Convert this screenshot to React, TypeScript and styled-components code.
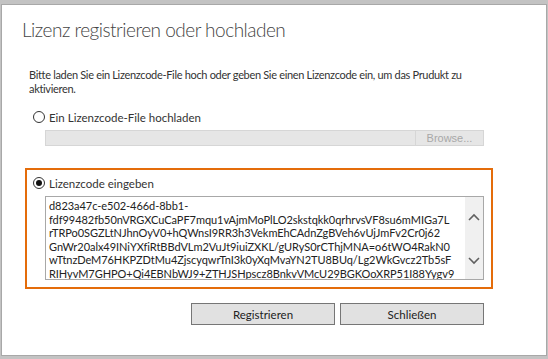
import React from 'react';
import styled, { createGlobalStyle } from 'styled-components';

const GlobalStyle = createGlobalStyle`
  html, body {
    margin: 0;
    padding: 0;
    background: #c3c3c3;
  }
  body {
    font-family: Lato, "Liberation Sans", sans-serif;
    color: #333;
  }
`;

const Dialog = styled.div`
  box-sizing: border-box;
  width: 546px;
  height: 352px;
  margin: 4px 0 0 1px;
  background: #fff;
  border: 1px solid #a8a8a8;
  display: flex;
  flex-direction: column;
`;

const Title = styled.h1`
  margin: 11px 0 0 20px;
  font-size: 19px;
  line-height: 28px;
  font-weight: 300;
  letter-spacing: -0.5px;
  color: #444;
`;

const Intro = styled.p`
  margin: 24px 0 0 27px;
  width: 450px;
  font-size: 11px;
  line-height: 14px;
  letter-spacing: -0.32px;
  color: #333;
`;

const Sections = styled.div`
  display: flex;
  flex-direction: column;
  gap: 13px;
  margin: 6px 0 0 23px;
  width: 468px;
`;

const Section = styled.div<{ $active?: boolean }>`
  box-sizing: border-box;
  display: flex;
  flex-direction: column;
  gap: 5px;
  padding: 5px 7px 7px 6px;
  border: 2px solid ${p => (p.$active ? '#e46c0a' : 'transparent')};
`;

const RadioRow = styled.label`
  display: flex;
  align-items: center;
  gap: 4px;
  height: 16px;
  font-size: 11.5px;
  color: #333;
`;

const Radio = styled.span<{ $checked?: boolean }>`
  box-sizing: border-box;
  width: 12px;
  height: 12px;
  border-radius: 50%;
  border: 1px solid #333;
  background: #fff;
  display: flex;
  align-items: center;
  justify-content: center;
  &::after {
    content: '';
    width: 6px;
    height: 6px;
    border-radius: 50%;
    background: ${p => (p.$checked ? '#111' : 'transparent')};
  }
`;

const FileField = styled.div`
  display: flex;
  margin-left: 12px;
  height: 16px;
`;

const FilePath = styled.div`
  flex: 1;
  box-sizing: border-box;
  background: #e6e6e6;
  border: 1px solid #d6d6d6;
  border-right: none;
`;

const BrowseButton = styled.div`
  box-sizing: border-box;
  width: 69px;
  background: #e6e6e6;
  border: 1px solid #d6d6d6;
  font-family: "Liberation Sans", Arial, sans-serif;
  font-size: 11px;
  line-height: 14px;
  color: #a8a8a8;
  text-align: center;
`;

const CodeBox = styled.div`
  box-sizing: border-box;
  display: flex;
  margin-left: 12px;
  height: 84px;
  border: 1px solid #a8a8a8;
  background: #fff;
`;

const CodeText = styled.div`
  flex: 1;
  overflow: hidden;
  padding: 2px 0 0 3px;
  font-size: 11px;
  line-height: 13.6px;
  letter-spacing: -0.05px;
  white-space: pre;
  color: #222;
`;

const ScrollBar = styled.div`
  width: 18px;
  background: #f0f0f0;
  display: flex;
  flex-direction: column;
  justify-content: space-between;
  align-items: center;
  padding: 16px 0 14px;
`;

const Buttons = styled.div`
  display: flex;
  justify-content: flex-end;
  gap: 5px;
  margin: 14px 62px 0 0;
`;

const Button = styled.button`
  box-sizing: border-box;
  width: 144px;
  height: 22px;
  padding: 0;
  border: 1px solid #767676;
  background: #e1e1e1;
  font-family: Lato, "Liberation Sans", sans-serif;
  font-size: 11.5px;
  color: #222;
`;

const Chevron = ({ up }: { up?: boolean }) => (
  <svg width="12" height="8" viewBox="0 0 12 8">
    <polyline
      points={up ? '1,7 6,2 11,7' : '1,1 6,6 11,1'}
      fill="none"
      stroke="#606060"
      strokeWidth="1.6"
    />
  </svg>
);

const codeLines = [
  'd823a47c-e502-466d-8bb1-',
  'fdf99482fb50nVRGXCuCaPF7mqu1vAjmMoPlLO2skstqkk0qrhrvsVF8su6mMIGa7L',
  'rTRPo0SGZLtNJhnOyV0+hQWnsI9RR3h3VekmEhCAdnZgBVeh6vUjJmFv2Cr0j62',
  'GnWr20alx49INiYXfiRtBBdVLm2VuJt9iuiZXKL/gURyS0rCThjMNA=o6tWO4RakN0',
  'wTtnzDeM76HKPZDtMu4ZjscyqwrTnI3k0yXqMvaYN2TU8BUq/Lg2WkGvcz2Tb5sF',
  'RIHyvM7GHPO+Qi4EBNbWJ9+ZTHJSHpscz8BnkvVMcU29BGKOoXRP51I88Yygv9',
];

export default function App() {
  return (
    <>
      <GlobalStyle />
      <Dialog>
        <Title>Lizenz registrieren oder hochladen</Title>
        <Intro>
          Bitte laden Sie ein Lizenzcode-File hoch oder geben Sie einen Lizenzcode ein, um das Prudukt zu aktivieren.
        </Intro>
        <Sections>
          <Section>
            <RadioRow>
              <Radio />
              Ein Lizenzcode-File hochladen
            </RadioRow>
            <FileField>
              <FilePath />
              <BrowseButton>Browse...</BrowseButton>
            </FileField>
          </Section>
          <Section $active>
            <RadioRow>
              <Radio $checked />
              Lizenzcode eingeben
            </RadioRow>
            <CodeBox>
              <CodeText>{codeLines.join('\n')}</CodeText>
              <ScrollBar>
                <Chevron up />
                <Chevron />
              </ScrollBar>
            </CodeBox>
          </Section>
        </Sections>
        <Buttons>
          <Button>Registrieren</Button>
          <Button>Schließen</Button>
        </Buttons>
      </Dialog>
    </>
  );
}
